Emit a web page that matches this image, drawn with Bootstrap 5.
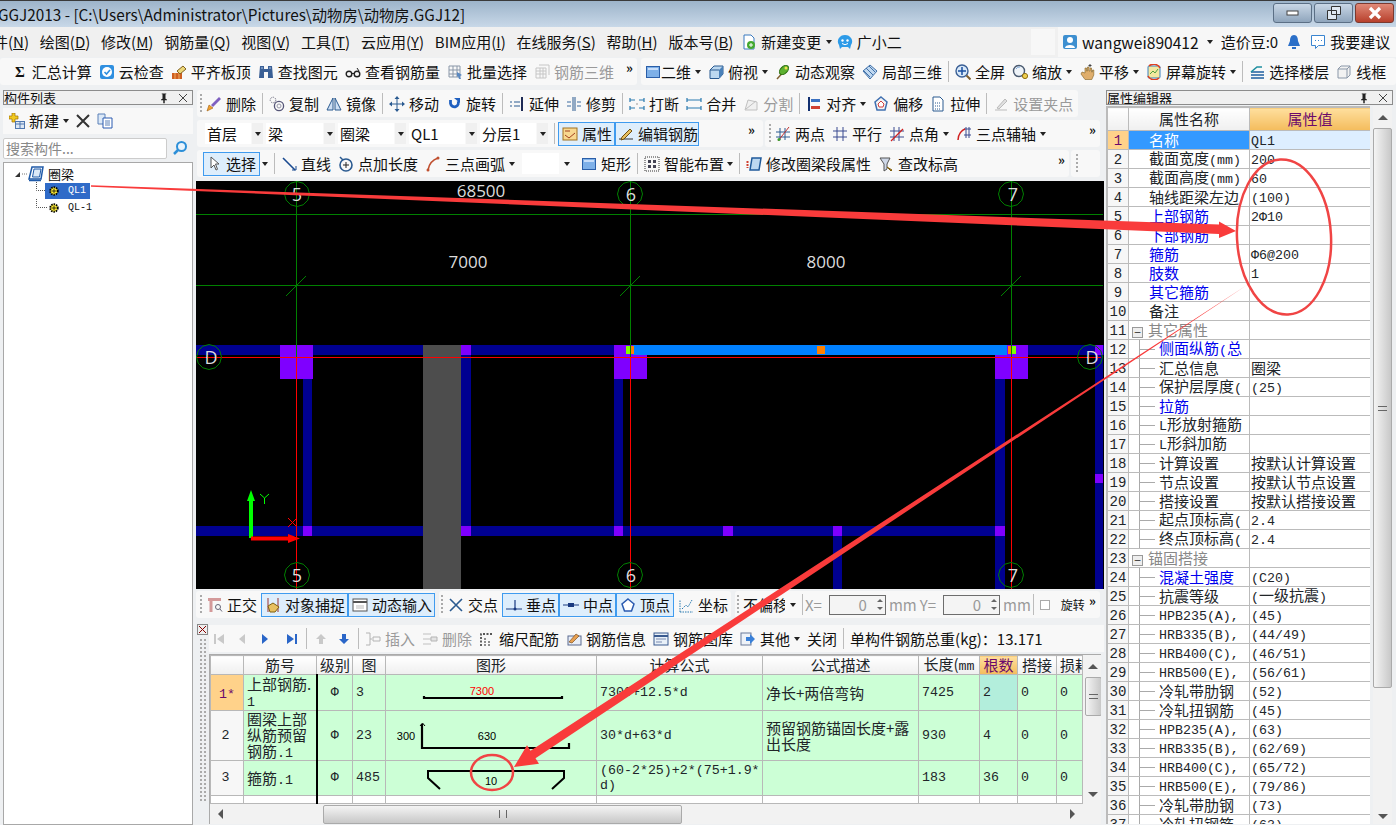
<!DOCTYPE html>
<html lang="zh">
<head>
<meta charset="UTF-8" />
<title>GGJ2013</title>
<link href="https://cdn.jsdelivr.net/npm/bootstrap@5.3.3/dist/css/bootstrap.min.css" rel="stylesheet" />
<style>
  body { width:1396px; height:825px; overflow:hidden; position:relative; background:#eef0f2; color:#111;
    font-family:"Noto Sans CJK SC","Liberation Sans",sans-serif; font-size:15px; line-height:18px; }
  .ic { width:16px; height:16px; flex:none; }
  .lat { font-family:"Liberation Mono","Noto Sans CJK SC",monospace; font-size:13.3px; line-height:1; }

  .wtitle { height:27px; background:linear-gradient(#9db4ca,#c8d8e8); border-top:1px solid #3a3a3a; padding-left:0; }
  .wtitle .ttl { margin-left:-2px; font-size:15.3px; white-space:nowrap; }
  .wbtn { width:39px; height:20px; margin:2px 2px 0 0; border:1px solid #5b6f85; border-radius:3px; background:linear-gradient(#c9d7e6,#8fa5bc); }
  .wbtn.cls { background:linear-gradient(#e08a78,#b8402c); border-color:#7a3a30; margin-right:2px; }
  .mbar { height:30px; background:#f0f0f0; gap:10.8px; white-space:nowrap; overflow:hidden; }
  .mbar .m0 { margin-left:-7px; }
  .mbar .mdoc { margin-left:-3px; }
  .mbar .mpull { margin-left:-6px; }
  .mright { height:30px; background:#f7f7f7; padding-left:4px; gap:4px; width:338px; flex:none; }
  .uname { font-size:15.6px; }
  .mstub { width:24px; height:26px; background:#f7f7f7; margin-left:auto; margin-right:-7.8px; flex:none; }

  .tbrow { height:33px; padding-top:1px; gap:4px; }
  .chunk { height:27px; background:#f8f8f8; border-radius:3px; gap:7px; white-space:nowrap; flex:none; }
  .ti { display:inline-flex; align-items:center; gap:4px; height:24px; flex:none; }
  .ti.off { color:#9a9a9a; }
  .ti.on { background:#deeefc; outline:1px solid #3f9bef; outline-offset:-1px; padding:0 1px 0 4px; }
  .tsep { width:1px; height:21px; background:#bcbcbc; margin:0 -1px; flex:none; }
  .sepb { margin:0 0 0 3px; }
  .grip { width:2px; height:20px; flex:none; margin-right:-3px; background:repeating-linear-gradient(#aaa 0 2px,transparent 2px 4px); }
  .cr { display:inline-block; width:0; height:0; flex:none; border-top:4px solid #222; border-left:3.5px solid transparent; border-right:3.5px solid transparent; }
  .more { font-size:13px; font-weight:700; line-height:10px; margin-bottom:8px; flex:none; }
  .sig { font-weight:700; font-family:"Liberation Serif",serif; font-size:15px; margin-right:3px; }

  .leftp { width:196px; flex:none; }
  .centerp { width:908px; flex:none; }
  .rightp { width:292px; flex:none; }
  .ptitle { height:15px; border:1px solid #8c8c8c; background:#f0f0f0; font-size:13px; line-height:13px; padding:0 4px 0 0; overflow:hidden; }
  .ltitle { margin:0 3px; }
  .rtitle { margin:0 3px 0 2px; }
  .ltool { height:26px; margin:3px 3px 0 3px; padding-left:6px; background:#f8f8f8; gap:6px; }
  .lsearch { height:22px; margin:3px 0 0 3px; gap:5px; }
  .lsearch .sbox { width:164px; height:21px; background:#fff; border:1px solid #ccc; color:#888; font-size:14px; line-height:19px; padding-left:2px; border-radius:2px; }
  .ltree { margin:3px 3px 0; height:663px; background:#fff; border:1px solid #a8a8a8; padding-top:2px; font-size:13px; }
  .trow { height:17px; display:flex; align-items:center; white-space:nowrap; }
  .trow.kid1 { margin-left:32px; }
  .qlname { font-family:"Liberation Mono",monospace; font-size:10px; padding-left:8px; white-space:nowrap; }
  .qlsel { background:#2f6bc8; color:#fff; display:flex; align-items:center; width:45px; height:16px; padding-left:3px; }

  .crow { height:30px; padding-top:0; gap:2px; }
  .crow.last { height:31px; }
  .cad { height:408px; background:#000; }
  .cad svg { display:block; }
  .cb { width:68px; height:21px; gap:1px; flex:none; }
  .cb .cbt { flex:1; background:#fff; height:21px; padding-left:2px; line-height:21px; overflow:hidden; white-space:nowrap; }
  .cb .cbt.flat { background:#f8f8f8; padding:0; }
  .cb .cbc { width:11px; height:21px; background:#f0f0f0; display:flex; align-items:center; justify-content:center; }
  .snapr { height:32px; padding-top:2px; gap:4px; }
  .spinp { width:57px; height:20px; padding:0 18px 0 0; border:1px solid #6d6d6d; border-radius:0; background:#f4f4f4; color:#999; text-align:right; font-size:15px; line-height:18px; flex:none; }
  .spinp:disabled { background:#f4f4f4; opacity:1; }
  .spinb { width:12px; height:20px; margin-left:-15px; flex:none; display:flex; flex-direction:column; justify-content:center; gap:5px; align-items:center; }
  .spinb i { display:block; width:0; height:0; border-left:3px solid transparent; border-right:3px solid transparent; }
  .spinb i.u { border-bottom:3px solid #666; }
  .spinb i.d { border-top:3px solid #666; }
  .graytx { color:#9a9a9a; flex:none; }
  .ck { width:10px; height:10px; border:1px solid #aaa; background:#fff; flex:none; }
  .rot12 { font-size:12px; }

  .rebar { height:204px; }
  .strip { width:13px; flex:none; padding-top:3px; }
  .strip .xbox { width:11px; height:11px; border:1px solid #888; background:#eee; margin-left:1px; }
  .strip .dots { width:8px; height:165px; margin:3px 0 0 3px; background:radial-gradient(circle,#aaa 1px,transparent 1.2px) 0 0/4px 4px; }
  .rtool { height:27px; background:#f8f8f8; margin-top:4px; padding-left:2px; gap:7px; white-space:nowrap; }
  .gr { color:#c9c9c9; }
  .bl { color:#2a66c8; }
  .rwrap { height:170px; width:892px; margin-top:2px; overflow:hidden; border:1px solid #aaa; border-width:1px 0 0 1px; background:#f2f2f2; }
  .rwrap .tblbox { width:873px; flex:none; }
  .vscroll { width:18px; flex:none; background:#f2f2f2; display:flex; flex-direction:column; align-items:center; }
  .vscroll.tblv { height:147px; margin-left:1px; }
  .vscroll .upa { width:0; height:0; border:5px solid transparent; border-top:0; border-bottom:5px solid #555; margin-top:9px; }
  .vscroll .dna { width:0; height:0; border:5px solid transparent; border-bottom:0; border-top:5px solid #555; margin-top:auto; margin-bottom:5px; }
  .thumb { width:17px; background:linear-gradient(90deg,#f4f4f4,#c8c8c8); border:1px solid #aaa; border-radius:2px; display:flex; align-items:center; justify-content:center; }
  .thumb.sm { height:39px; }
  .thumb b { width:9px; height:5px; border-top:1px solid #666; border-bottom:1px solid #666; display:block; }
  .hscroll { height:20px; background:#f2f2f2; width:873px; }
  .hscroll .la, .hscroll .ra { width:0; height:0; border:5px solid transparent; flex:none; }
  .hscroll .la { border-left:0; border-right:5px solid #555; margin-left:8px; }
  .hscroll .ra { border-right:0; border-left:5px solid #555; margin-left:auto; margin-right:8px; }
  .hthumb { width:359px; height:19px; margin-left:100px; background:linear-gradient(#f4f4f4,#c8c8c8); border:1px solid #aaa; border-radius:2px; display:flex; align-items:center; justify-content:center; }
  .hthumb b { width:8px; height:8px; border-left:1px solid #666; border-right:1px solid #666; display:block; }

  .rb.table { table-layout:fixed; width:872px; margin:0; --bs-table-bg:transparent; }
  .rb>thead>tr>th, .rb>tbody>tr>td { padding:0 3px; border:1px solid #b8b8b8; vertical-align:middle; font-weight:400; line-height:16px; overflow:hidden; }
  .rb>thead>tr>th { height:19px; text-align:center; background:linear-gradient(#fff,#efefef); white-space:nowrap; line-height:14px; }
  .rb>tbody>tr>td { background:#ccffd6; }
  .rb>tbody>tr.r1 { height:36px; }
  .rb>tbody>tr.r2 { height:50px; }
  .rb>tbody>tr.r3 { height:35px; }
  .rb>tbody>tr.blank>td { background:#fff; height:8px; }
  .rb>thead>tr>th.ohd, .pg>thead>tr>th.ohd { background:linear-gradient(#ffdf9e,#f4bc5c); color:#6b0a6b; }
  .rb>tbody>tr>td.rn { background:#f7f7f7; text-align:center; padding-left:0; }
  .rb>tbody>tr>td.rnsel { background:#ffd28a; color:#6b0a6b; text-align:center; }
  .rb>tbody>tr>td.cnt { background:#b3eedc; }
  .rb>tbody>tr>td.bk, .rb>thead>tr>th.bk { border-right:2px solid #000; }
  .rb>tbody>tr>td.shp { padding:0; }
  .rb>tbody>tr>td.fm2 { line-height:15px; white-space:nowrap; }
  .rb svg { display:block; }

  .rgrid { margin:1px 3px 0 2px; height:718px; }
  .gridbox { width:264px; flex:none; height:718px; overflow:hidden; border:1px solid #bbb; border-width:1px 0 0 1px; background:#fff; }
  .pg.table { table-layout:fixed; width:263px; margin:0; --bs-table-bg:transparent; }
  .pg>thead>tr>th, .pg>tbody>tr>td { padding:0 1px; height:19px; border:1px solid #bbb; font-weight:400; line-height:14px; white-space:nowrap; overflow:hidden; vertical-align:middle; }
  .pg>tbody>tr { height:19px; }
  .pg>thead>tr>th { height:23px; text-align:center; background:linear-gradient(#fff,#efefef); }
  .pg>tbody>tr>td.n { background:#f7f7f7; text-align:center; padding:0; }
  .pg>tbody>tr>td.nsel { background:#ffd28a; color:#6b0a6b; text-align:center; padding:0; }
  .pg>tbody>tr>td.nm { padding-left:20px; }
  .pg>tbody>tr>td.nmsel { padding-left:20px; background:#3399ff; color:#fff; }
  .pg>tbody>tr>td.vsel { background:#ddeeff; }
  .pg>tbody>tr>td.blu { color:#0000ee; }
  .pg>tbody>tr>td.grp { color:#888; padding-left:20px; }
  .pg>tbody>tr>td.kid { padding-left:30px; background:linear-gradient(#aaa,#aaa) 10px 0/1px 100% no-repeat, linear-gradient(#aaa,#aaa) 10px 9px/16px 1px no-repeat; }
  .numc { font-size:14px; }
  .minus { display:inline-block; width:11px; height:11px; margin:0 5px 0 -17px; border:1px solid #999; background:#eee; vertical-align:-1px; line-height:7px; text-align:center; color:#333; font-size:12px; }
  .rvs { height:718px; margin-left:3px; width:19px; }
  .rvs .thumb { width:19px; height:560px; margin-top:8px; }

  .anno { position:absolute; left:0; top:0; pointer-events:none; }
</style>
</head>
<body>

<svg class="d-none">
  <symbol id="i-doc" viewBox="0 0 16 16"><path d="M3 1h7l3 3v11H3z" fill="#fff" stroke="#3a7ac0"/><circle cx="10" cy="11" r="4" fill="#43a82f"/><path d="M8 11h4M10 9v4" stroke="#fff"/></symbol>
  <symbol id="i-bub" viewBox="0 0 16 16"><path d="M8 1a7 6.500 0 0 1 6 10l-1 4-2-2H5l-2 2-1-4A7 6.500 0 0 1 8 1z" fill="#2d9be8"/><circle cx="5.500" cy="6.500" r="1.200" fill="#fff"/><circle cx="10.500" cy="6.500" r="1.200" fill="#fff"/><path d="M5 9.500q3 2.500 6 0" stroke="#fff" fill="none"/></symbol>
  <symbol id="i-usr" viewBox="0 0 16 16"><rect x="1" y="1" width="14" height="14" rx="2" fill="#3d8fd0"/><circle cx="8" cy="6" r="3" fill="#fff"/><path d="M3 14c0-4 10-4 10 0z" fill="#fff"/></symbol>
  <symbol id="i-bell" viewBox="0 0 16 16"><path d="M8 1c3 0 4 3 4 6l2 5H2l2-5c0-3 1-6 4-6z" fill="#2b6fc8"/><path d="M6 13h4v2H6z" fill="#2b6fc8"/></symbol>
  <symbol id="i-chat" viewBox="0 0 16 16"><path d="M1.500 1.500h13v10h-6l-3 3v-3h-4z" fill="#fff" stroke="#3a85d0"/><path d="M5 6.500h1M8 6.500h1M11 6.500h1" stroke="#3a85d0"/></symbol>
  <symbol id="i-cloud" viewBox="0 0 16 16"><rect x="1" y="1" width="14" height="14" rx="2" fill="#2f8fe0"/><circle cx="8" cy="8" r="5" fill="#fff"/><path d="M5.500 8l2 2 3.500-4" fill="none" stroke="#2f8fe0" stroke-width="1.600"/></symbol>
  <symbol id="i-flat" viewBox="0 0 16 16"><path d="M1 9h10v6H1z" fill="#cf5f20"/><path d="M4 9v6M8 9v6" stroke="#f0b060"/><path d="M6 7l6-5 3 3-6 5z" fill="#ecd778" stroke="#806020"/></symbol>
  <symbol id="i-bino" viewBox="0 0 16 16"><path d="M2 2h4v3h4V2h4l1 12h-5V8H6v6H1z" fill="#3a5f95"/><path d="M3 4h2M11 4h2" stroke="#a8c4e8"/></symbol>
  <symbol id="i-glass" viewBox="0 0 16 16"><circle cx="4" cy="10" r="2.800" fill="none" stroke="#222" stroke-width="1.400"/><circle cx="12" cy="10" r="2.800" fill="none" stroke="#222" stroke-width="1.400"/><path d="M7 9.500h2M14 7l-2-3" stroke="#222"/></symbol>
  <symbol id="i-batch" viewBox="0 0 16 16"><path d="M2 2h11v11H2zM2 6h11M2 10h11M6 2v11M10 2v11" fill="none" stroke="#8a97a8"/><path d="M10 8l5 3-2 1 1 3-2 0-1-3-1 1z" fill="#5a88c0"/></symbol>
  <symbol id="i-3dg" viewBox="0 0 16 16"><path d="M2 4h10v10H2zM5 1h10v10M2 7h10M2 10h10M6 4v10M9 4v10" fill="none" stroke="#c6c6c6"/></symbol>
  <symbol id="i-sq" viewBox="0 0 16 16"><rect x="1.500" y="2.500" width="13" height="11" fill="#7eb0e8" stroke="#2a5ea8"/><path d="M3 4h10v2H3z" fill="#c8defa"/></symbol>
  <symbol id="i-cube" viewBox="0 0 16 16"><path d="M2 6l4-4h9v8l-4 4.500H2z" fill="#bcd8f0" stroke="#2a5a90"/><path d="M11 14.500V6l4-4v8z" fill="#4a80b8"/><path d="M2 6h9" stroke="#2a5a90"/></symbol>
  <symbol id="i-orbit" viewBox="0 0 16 16"><path d="M2 15L13 3" stroke="#806030" stroke-width="1.500"/><ellipse cx="9" cy="6" rx="5.500" ry="3.500" transform="rotate(-45 9 6)" fill="#5cb030" stroke="#2d7010"/><circle cx="11" cy="4" r="1.500" fill="#f0e050"/></symbol>
  <symbol id="i-local" viewBox="0 0 16 16"><path d="M8 1l7 6-7 8-7-8z" fill="#c0d8f0" stroke="#4070a8"/><path d="M4 4l7 7M7 2l6 6M2 7l6 6" stroke="#4070a8"/></symbol>
  <symbol id="i-full" viewBox="0 0 16 16"><circle cx="7" cy="7" r="6" fill="#d8e8f8" stroke="#3a5f95" stroke-width="1.400"/><path d="M7 3v8M3 7h8" stroke="#1a4fa0" stroke-width="1.500"/><path d="M11.500 11.500l4 4" stroke="#806030" stroke-width="2"/></symbol>
  <symbol id="i-zoomi" viewBox="0 0 16 16"><circle cx="7" cy="7" r="5.500" fill="#eef3f8" stroke="#4a5a70" stroke-width="1.400"/><path d="M4 5a4 4 0 0 1 4-2" stroke="#7ea8d8" fill="none"/><circle cx="13" cy="12" r="2.600" fill="#efcf50" stroke="#907010"/></symbol>
  <symbol id="i-hand" viewBox="0 0 16 16"><path d="M3 8l3 1V4h1.500v3h1V3H10v4h1V4h1.500v4h1V6h1.300v5l-2 4.500H6L2 10z" fill="#dfae6c" stroke="#806020" stroke-width=".6"/><path d="M11 0v3M9.500 1.500h3" stroke="#444"/></symbol>
  <symbol id="i-screen" viewBox="0 0 16 16"><rect x="2" y="2" width="12" height="12" rx="1" fill="#f4e8a0" stroke="#3a80c0"/><path d="M4 10l3-3 2 2 3-4" stroke="#50a040" fill="none"/><path d="M14 4A7 7 0 0 0 3 2M2 12a7 7 0 0 0 11 2" stroke="#e04020" fill="none" stroke-width="1.500"/></symbol>
  <symbol id="i-floor" viewBox="0 0 16 16"><path d="M2 8h13M2 11h13M2 14h13" stroke="#1f5fa0" stroke-width="1.600" fill="none"/><path d="M2 8l6-5h5" stroke="#1f8fa0" stroke-width="1.600" fill="none"/></symbol>
  <symbol id="i-wire" viewBox="0 0 16 16"><path d="M2 5l3-3h9v9l-3 3H2zM2 5h9v9M11 5l3-3" fill="#f2f2f2" stroke="#8a97a8"/></symbol>
  <symbol id="i-brush" viewBox="0 0 16 16"><path d="M1 15l2-6 4 3z" fill="#f0a030" stroke="#a06010" stroke-width=".6"/><path d="M5 9l8-8 2 2-8 8z" fill="#7f60c0"/></symbol>
  <symbol id="i-copyc" viewBox="0 0 16 16"><circle cx="4" cy="4" r="2.800" fill="none" stroke="#778" stroke-dasharray="1.500 1"/><circle cx="10" cy="10" r="4.600" fill="none" stroke="#557" stroke-width="1.300"/><circle cx="10" cy="10" r="2" fill="none" stroke="#99a"/></symbol>
  <symbol id="i-mirror" viewBox="0 0 16 16"><path d="M7 2v12H1zM9 2v12h6z" fill="#cfe0f4" stroke="#2a5a90"/></symbol>
  <symbol id="i-move" viewBox="0 0 16 16"><path d="M8 1v14M1 8h14" stroke="#2a5a90"/><path d="M8 0l-2.500 3h5zM8 16l-2.500-3h5zM0 8l3-2.500v5zM16 8l-3-2.500v5z" fill="#2a5a90"/></symbol>
  <symbol id="i-rot" viewBox="0 0 16 16"><path d="M4.500 4v3.500a4 4 0 1 0 7.500-2.500" fill="none" stroke="#2060c0" stroke-width="2.800"/><path d="M8 2h6v5z" fill="#2060c0"/></symbol>
  <symbol id="i-ext" viewBox="0 0 16 16"><path d="M1 6h2M1 10h2M5 6h6M5 10h6" stroke="#2a5a90"/><path d="M13 1v14" stroke="#1d2a55" stroke-width="2"/></symbol>
  <symbol id="i-trim" viewBox="0 0 16 16"><path d="M7 1v14M9 1v14" stroke="#2a5a90"/><path d="M1 6h4M1 10h4M11 6h4M11 10h4" stroke="#3a6aa0"/></symbol>
  <symbol id="i-brk" viewBox="0 0 16 16"><path d="M1 4h5M10 4h5M1 12h5M10 12h5M1 2v4M15 2v4M1 10v4M15 10v4" stroke="#2a7ab0" stroke-width="1.200"/><path d="M7 8h2" stroke="#999"/></symbol>
  <symbol id="i-mrg" viewBox="0 0 16 16"><path d="M1 4h14M1 12h14M1 2v4M15 2v4M1 10v4M15 10v4" stroke="#2a7ab0" stroke-width="1.200"/></symbol>
  <symbol id="i-splt" viewBox="0 0 16 16"><path d="M2 14h12V6L5 4zM3 13l10-8" fill="#f0f0f0" stroke="#c0c0c0"/></symbol>
  <symbol id="i-aln" viewBox="0 0 16 16"><path d="M3 1v14" stroke="#123070" stroke-width="2"/><rect x="5" y="3" width="9" height="3" fill="#3a70c0"/><rect x="5" y="10" width="9" height="3" fill="#d04030"/></symbol>
  <symbol id="i-off" viewBox="0 0 16 16"><path d="M8 1l6 5-2 8H4L2 6z" fill="#f4f4f4" stroke="#4070b0" stroke-width="1.500"/><path d="M8 5l3 3-1 3H6L5 8z" fill="#fff" stroke="#d04040"/></symbol>
  <symbol id="i-str" viewBox="0 0 16 16"><path d="M3 1h7l3 3v11H3z" fill="#fff" stroke="#2a5a90"/><path d="M5 7h6M5 10h6M5 13h6" stroke="#2a5a90" stroke-dasharray="1 1"/></symbol>
  <symbol id="i-ggr" viewBox="0 0 16 16"><path d="M2 14h12" stroke="#bbb"/><path d="M4 12l8-9 2 2-8 8z" fill="#e0e0e0" stroke="#bbb"/></symbol>
  <symbol id="i-prop" viewBox="0 0 16 16"><rect x="1" y="2" width="14" height="12" fill="#f8d890" stroke="#a07020"/><path d="M3 5h5M3 9l4 3 6-5" stroke="#a04020" fill="none"/></symbol>
  <symbol id="i-pen" viewBox="0 0 16 16"><path d="M1 13h14" stroke="#333"/><path d="M4 11l8-8 2 2-8 8-3 1z" fill="#e8c060" stroke="#705010"/></symbol>
  <symbol id="i-2pt" viewBox="0 0 16 16"><path d="M5 2v12M10 2v12M1 6h14M1 11h14" stroke="#2a5a90"/><path d="M3 15L14 1" stroke="#c03030"/><circle cx="4" cy="13.500" r="1.500" fill="#3aa030"/></symbol>
  <symbol id="i-par" viewBox="0 0 16 16"><path d="M5 1v14M11 1v14M1 5h14M1 11h14" stroke="#3a4a90"/></symbol>
  <symbol id="i-ang" viewBox="0 0 16 16"><path d="M5 1v14M10 1v14M1 5h14M1 11h14" stroke="#3a4a90"/><path d="M2 15L14 3" stroke="#d02020" stroke-width="1.300"/></symbol>
  <symbol id="i-3pa" viewBox="0 0 16 16"><path d="M8 3h7M8 9h7M10 1v11M13 1v11" stroke="#3a4a90"/><path d="M2 14C2 8 6 4 9 3" stroke="#d02020" fill="none" stroke-width="1.500"/></symbol>
  <symbol id="i-cur" viewBox="0 0 16 16"><path d="M4 1v11l3-3 2 5 1.500-.7L8.500 8H12z" fill="#fff" stroke="#555"/></symbol>
  <symbol id="i-line" viewBox="0 0 16 16"><path d="M2 2l12 12" stroke="#1a4a90" stroke-width="1.600"/><path d="M11 14h4v-4" stroke="#1a4a90" fill="none"/></symbol>
  <symbol id="i-plen" viewBox="0 0 16 16"><circle cx="8" cy="9" r="6" fill="none" stroke="#2a5a90" stroke-width="1.600"/><path d="M8 6v6M5 9h6" stroke="#222"/><path d="M2 1l3 3" stroke="#2a5a90" stroke-width="1.500"/></symbol>
  <symbol id="i-arc" viewBox="0 0 16 16"><path d="M3 14C4 8 7 4 13 2" fill="none" stroke="#c05030" stroke-width="1.600"/><circle cx="3" cy="14" r="1.500" fill="#c05030"/><circle cx="13" cy="2" r="1.500" fill="#c05030"/></symbol>
  <symbol id="i-smart" viewBox="0 0 16 16"><rect x="1" y="1" width="14" height="14" fill="none" stroke="#333" stroke-dasharray="1 1"/><path d="M4 4h3v3H4zM9 9h3v3H9zM9 4h3v3H9zM4 9h3v3H4z" fill="#445"/></symbol>
  <symbol id="i-mod" viewBox="0 0 16 16"><path d="M6 2h9l-2 12H4z" fill="#bcd8f0" stroke="#1f5a9a" stroke-width="1.500"/><path d="M1.500 5v7" stroke="#d04030" stroke-width="2" stroke-dasharray="2 1"/></symbol>
  <symbol id="i-elev" viewBox="0 0 16 16"><path d="M2 2h10L9 8v5l-3 2V8z" fill="#cfd8e8" stroke="#555"/><path d="M9 11l5 3-1 1z" fill="#c09030" stroke="#806010"/></symbol>
  <symbol id="i-ort" viewBox="0 0 16 16"><path d="M1 2.500h13M4 2v13" stroke="#d49a9a" stroke-width="3"/><circle cx="11" cy="10" r="2.500" fill="none" stroke="#667"/><path d="M13 12l2 2.500" stroke="#667"/></symbol>
  <symbol id="i-snp" viewBox="0 0 16 16"><path d="M3 1v14M13 1v14" stroke="#933"/><path d="M3 9l5-3 6 4-4 5H5z" fill="#e8c060" stroke="#806010"/></symbol>
  <symbol id="i-dyn" viewBox="0 0 16 16"><rect x="1" y="2" width="14" height="12" fill="#fff" stroke="#555"/><path d="M1 5h14" stroke="#555" stroke-width="2"/><path d="M4 8h8v4H4z" fill="#ddd"/></symbol>
  <symbol id="i-xp" viewBox="0 0 16 16"><path d="M2 2l12 12M14 2L2 14" stroke="#2a5a90" stroke-width="1.600"/></symbol>
  <symbol id="i-perp" viewBox="0 0 16 16"><path d="M0 12h16M9 3v9" stroke="#1a3a80" stroke-width="1.200"/><circle cx="9" cy="12" r="1.500" fill="#1a3a80"/></symbol>
  <symbol id="i-mid" viewBox="0 0 16 16"><path d="M0 8h16" stroke="#1a3a80"/><rect x="5" y="6" width="6" height="4" fill="#1a3a80"/></symbol>
  <symbol id="i-ver" viewBox="0 0 16 16"><path d="M8 2l6 5-2.500 7h-7L2 7z" fill="#fff" stroke="#2a5ab0" stroke-width="1.500"/></symbol>
  <symbol id="i-crd" viewBox="0 0 16 16"><path d="M2 15V3M2 15h13M4 12l4-4 2 2 4-7" stroke="#2a7ab0" stroke-dasharray="1.500 1" fill="none"/></symbol>
  <symbol id="i-first" viewBox="0 0 16 16"><path d="M3 3h2v10H3zM13 3v10L6 8z" fill="currentColor"/></symbol>
  <symbol id="i-prev" viewBox="0 0 16 16"><path d="M11 3v10L5 8z" fill="currentColor"/></symbol>
  <symbol id="i-next" viewBox="0 0 16 16"><path d="M5 3v10l6-5z" fill="currentColor"/></symbol>
  <symbol id="i-last" viewBox="0 0 16 16"><path d="M11 3h2v10h-2zM3 3v10l7-5z" fill="currentColor"/></symbol>
  <symbol id="i-up" viewBox="0 0 16 16"><path d="M8 3l5 5h-3v5H6V8H3z" fill="currentColor"/></symbol>
  <symbol id="i-dn" viewBox="0 0 16 16"><path d="M8 13l5-5h-3V3H6v5H3z" fill="currentColor"/></symbol>
  <symbol id="i-ins" viewBox="0 0 16 16"><path d="M1 2h4v12H1M5 8h2M8 6h7v4H8z" fill="none" stroke="#b4b4b4"/></symbol>
  <symbol id="i-rdel" viewBox="0 0 16 16"><path d="M1 3h8M1 8h8M1 13h8" stroke="#c0c0c0"/><path d="M9 6h6v4H9z" fill="#e4e4e4" stroke="#b4b4b4"/></symbol>
  <symbol id="i-scale" viewBox="0 0 16 16"><path d="M2 15V3h12" stroke="#222" stroke-dasharray="2 1.500" fill="none" stroke-width="1.400"/><path d="M6 7v8M10 10v5" stroke="#222" stroke-dasharray="2 1"/></symbol>
  <symbol id="i-info" viewBox="0 0 16 16"><rect x="2" y="5" width="13" height="9" fill="#e8eef8" stroke="#5a6a90"/><path d="M3 11l7-8 3 2-7 7z" fill="#e8a050" stroke="#805020" stroke-width=".7"/></symbol>
  <symbol id="i-lib" viewBox="0 0 16 16"><rect x="1" y="2" width="14" height="12" fill="#e8f0f8" stroke="#3a5a90"/><path d="M1 5h14" stroke="#3a5a90" stroke-width="2"/><path d="M3 8h10M3 11h6" stroke="#7a8ab0"/></symbol>
  <symbol id="i-oth" viewBox="0 0 16 16"><rect x="1" y="2" width="10" height="12" fill="#eef2f8" stroke="#6a7a9a"/><path d="M6 6h4V3l5 5-5 5v-3H6z" fill="#3a80d8"/></symbol>
  <symbol id="i-new" viewBox="0 0 16 16"><path d="M3 0h3v3h3v3H6v3H3V6H0V3h3z" fill="#f0c820" stroke="#a07000" stroke-width=".7"/><rect x="6.500" y="8.500" width="9" height="7" fill="#dde8f5" stroke="#5078b0"/><path d="M6.500 11h9M11 8.500v7" stroke="#5078b0"/></symbol>
  <symbol id="i-cp2" viewBox="0 0 16 16"><path d="M1 1h7v10H1z" fill="#dce9f7" stroke="#5a80b8"/><path d="M6 5h9v10H6z" fill="#fff" stroke="#2a5ab0"/><path d="M8 8h5M8 10h5M8 12h5" stroke="#5a80b8"/></symbol>
  <symbol id="i-srch" viewBox="0 0 16 16"><circle cx="9.500" cy="6.500" r="4.500" fill="#eaf4fc" stroke="#2d8fd8" stroke-width="2"/><path d="M6 10l-4 4" stroke="#2d8fd8" stroke-width="2.500"/></symbol>
  <symbol id="i-fr" viewBox="0 0 16 16"><path d="M4 1h11l-2 12H1z" fill="#fff" stroke="#1f5aa8" stroke-width="1.500"/><path d="M6 3h7l-1.500 8H4.500z" fill="#dce9f7" stroke="#1f5aa8"/><path d="M1 14.500h12" stroke="#1f5aa8" stroke-width="1.500"/></symbol>
  <symbol id="i-gear" viewBox="0 0 16 16"><circle cx="8" cy="8" r="5" fill="#ffee33" stroke="#000" stroke-width="2.500" stroke-dasharray="2 1.200"/><path d="M5 8h6M8 5v6" stroke="#000"/></symbol>
  <symbol id="i-pin" viewBox="0 0 16 16"><path d="M5 2h6v1h-1v6l2 1v1H9v4H7v-4H4v-1l2-1V3H5z" fill="#222"/></symbol>
  <symbol id="i-bubble" viewBox="-13 -13 26 26" overflow="visible"><polygon points="12.500,0 10.800,6.200 6.200,10.800 0,12.500 -6.200,10.800 -10.800,6.200 -12.500,0 -10.800,-6.200 -6.200,-10.800 0,-12.500 6.200,-10.800 10.800,-6.200" fill="none" stroke="#008000"/></symbol>
</svg>

<div class="wtitle d-flex align-items-start">
  <div class="ttl flex-grow-1 pt-1">GGJ2013 - [C:\Users\Administrator\Pictures\动物房\动物房.GGJ12]</div>
  <div class="wbtn d-flex align-items-center justify-content-center"><svg width="16" height="8"><rect x="2" y="2" width="11" height="4" fill="#fff" stroke="#444"/></svg></div>
  <div class="wbtn d-flex align-items-center justify-content-center"><svg width="16" height="16"><path d="M5.500 1.500h9v8h-9zM1.500 5.500h9v9h-9z" fill="#dfe8f2" stroke="#333"/></svg></div>
  <div class="wbtn cls d-flex align-items-center justify-content-center"><svg width="14" height="14"><path d="M2 2l10 10M12 2L2 12" stroke="#fff" stroke-width="3.200"/></svg></div>
</div>

<div class="mbar d-flex align-items-center">
  <span class="m0">件(<u>N</u>)</span><span>绘图(<u>D</u>)</span><span>修改(<u>M</u>)</span><span>钢筋量(<u>Q</u>)</span><span>视图(<u>V</u>)</span><span>工具(<u>T</u>)</span><span>云应用(<u>Y</u>)</span><span>BIM应用(<u>I</u>)</span><span>在线服务(<u>S</u>)</span><span>帮助(<u>H</u>)</span><span>版本号(<u>B</u>)</span>
  <span class="ti mdoc"><svg class="ic"><use href="#i-doc"/></svg>新建变更</span><span class="cr mpull"></span>
  <span class="ti mpull"><svg class="ic"><use href="#i-bub"/></svg>广小二</span>
  <span class="mstub"></span>
  <div class="mright d-flex align-items-center">
    <svg class="ic"><use href="#i-usr"/></svg><span class="uname">wangwei890412</span><span class="cr ms-1"></span><span class="ms-1">造价豆:0</span><svg class="ic ms-1"><use href="#i-bell"/></svg><svg class="ic ms-1"><use href="#i-chat"/></svg><span>我要建议</span>
  </div>
</div>

<div class="tbrow d-flex">
  <div class="chunk d-flex align-items-center" style="width:637px;padding-left:15px">
    <span class="ti"><span class="sig">Σ</span>汇总计算</span>
    <span class="ti"><svg class="ic"><use href="#i-cloud"/></svg>云检查</span>
    <span class="ti"><svg class="ic"><use href="#i-flat"/></svg>平齐板顶</span>
    <span class="ti"><svg class="ic"><use href="#i-bino"/></svg>查找图元</span>
    <span class="ti"><svg class="ic"><use href="#i-glass"/></svg>查看钢筋量</span>
    <span class="ti"><svg class="ic"><use href="#i-batch"/></svg>批量选择</span>
    <span class="ti off"><svg class="ic"><use href="#i-3dg"/></svg>钢筋三维</span>
    <span class="more ms-auto me-1">»</span>
  </div>
  <div class="chunk d-flex align-items-center" style="padding-left:4px;width:755px">
    <span class="ti gap-0"><svg class="ic"><use href="#i-sq"/></svg>二维<span class="cr ms-1"></span></span>
    <span class="ti"><svg class="ic"><use href="#i-cube"/></svg>俯视<span class="cr"></span></span>
    <span class="ti"><svg class="ic"><use href="#i-orbit"/></svg>动态观察</span>
    <span class="ti"><svg class="ic"><use href="#i-local"/></svg>局部三维</span>
    <span class="tsep"></span>
    <span class="ti"><svg class="ic"><use href="#i-full"/></svg>全屏</span>
    <span class="ti"><svg class="ic"><use href="#i-zoomi"/></svg>缩放<span class="cr"></span></span>
    <span class="ti"><svg class="ic"><use href="#i-hand"/></svg>平移<span class="cr"></span></span>
    <span class="ti"><svg class="ic"><use href="#i-screen"/></svg>屏幕旋转<span class="cr"></span></span>
    <span class="tsep"></span>
    <span class="ti"><svg class="ic"><use href="#i-floor"/></svg>选择楼层</span>
    <span class="ti"><svg class="ic"><use href="#i-wire"/></svg>线框</span>
  </div>
</div>

<div class="d-flex">
  <div class="leftp">
    <div class="ptitle ltitle d-flex align-items-center">
      <span class="flex-grow-1">构件列表</span>
      <svg width="12" height="12" class="me-2"><use href="#i-pin"/></svg>
      <svg width="10" height="10"><path d="M1 1l8 8M9 1L1 9" stroke="#444"/></svg>
    </div>
    <div class="ltool d-flex align-items-center">
      <span class="ti"><svg class="ic"><use href="#i-new"/></svg>新建<span class="cr"></span></span>
      <svg class="ic"><path d="M2 2l12 12M14 2L2 14" stroke="#333" stroke-width="2"/></svg>
      <svg class="ic"><use href="#i-cp2"/></svg>
    </div>
    <div class="lsearch d-flex align-items-center">
      <div class="sbox">搜索构件...</div>
      <svg class="ic"><use href="#i-srch"/></svg>
    </div>
    <div class="ltree">
      <div class="trow"><svg width="24" height="17"><path d="M11 12h5V7z" fill="#333"/><path d="M18 9h6" stroke="#777" stroke-dasharray="1 1"/></svg><svg class="ic"><use href="#i-fr"/></svg><span class="ms-1">圈梁</span></div>
      <div class="trow kid1"><svg width="9" height="17"><path d="M.5 0V8.500H9" stroke="#555" stroke-dasharray="1 1" fill="none"/></svg><span class="qlsel"><svg width="12" height="12"><use href="#i-gear"/></svg><span class="qlname">QL1</span></span></div>
      <div class="trow kid1"><svg width="12" height="17"><path d="M.5 0V8.500H12" stroke="#555" stroke-dasharray="1 1" fill="none"/></svg><svg width="12" height="12"><use href="#i-gear"/></svg><span class="qlname">QL-1</span></div>
    </div>
  </div>

  <div class="centerp d-flex flex-column">
    <div class="crow d-flex">
      <div class="chunk d-flex align-items-center" style="width:881px;padding-left:3px;margin-left:1px">
        <span class="grip"></span>
        <span class="ti"><svg class="ic"><use href="#i-brush"/></svg>删除</span><span class="tsep"></span>
        <span class="ti"><svg class="ic"><use href="#i-copyc"/></svg>复制</span>
        <span class="ti"><svg class="ic"><use href="#i-mirror"/></svg>镜像</span><span class="tsep"></span>
        <span class="ti"><svg class="ic"><use href="#i-move"/></svg>移动</span>
        <span class="ti"><svg class="ic"><use href="#i-rot"/></svg>旋转</span><span class="tsep"></span>
        <span class="ti"><svg class="ic"><use href="#i-ext"/></svg>延伸</span>
        <span class="ti"><svg class="ic"><use href="#i-trim"/></svg>修剪</span><span class="tsep"></span>
        <span class="ti"><svg class="ic"><use href="#i-brk"/></svg>打断</span>
        <span class="ti"><svg class="ic"><use href="#i-mrg"/></svg>合并</span>
        <span class="ti off"><svg class="ic"><use href="#i-splt"/></svg>分割</span><span class="tsep"></span>
        <span class="ti"><svg class="ic"><use href="#i-aln"/></svg>对齐<span class="cr"></span></span>
        <span class="ti"><svg class="ic"><use href="#i-off"/></svg>偏移</span>
        <span class="ti"><svg class="ic"><use href="#i-str"/></svg>拉伸</span><span class="tsep"></span>
        <span class="ti off"><svg class="ic"><use href="#i-ggr"/></svg>设置夹点</span>
      </div>
    </div>
    <div class="crow d-flex">
      <div class="chunk d-flex align-items-center" style="width:566px;padding-left:8px;margin-left:1px;gap:3px">
        <span class="cb d-flex" style="width:58px"><span class="cbt">首层</span><span class="cbc"><span class="cr"></span></span></span>
        <span class="cb d-flex" style="width:69px"><span class="cbt">梁</span><span class="cbc"><span class="cr"></span></span></span>
        <span class="cb d-flex"><span class="cbt">圈梁</span><span class="cbc"><span class="cr"></span></span></span>
        <span class="cb d-flex"><span class="cbt">QL1</span><span class="cbc"><span class="cr"></span></span></span>
        <span class="cb d-flex"><span class="cbt">分层1</span><span class="cbc"><span class="cr"></span></span></span>
        <span class="tsep sepb"></span>
        <span class="ti on" style="width:57px"><svg class="ic"><use href="#i-prop"/></svg>属性</span>
        <span class="ti on" style="margin-left:-3px;padding-left:3px"><svg class="ic"><use href="#i-pen"/></svg>编辑钢筋</span>
        <span class="more ms-auto me-2">»</span>
      </div>
      <div class="chunk d-flex align-items-center" style="width:335px;padding-left:4px">
        <span class="grip"></span>
        <span class="ti"><svg class="ic"><use href="#i-2pt"/></svg>两点</span>
        <span class="ti"><svg class="ic"><use href="#i-par"/></svg>平行</span>
        <span class="ti"><svg class="ic"><use href="#i-ang"/></svg>点角<span class="cr"></span></span>
        <span class="ti"><svg class="ic"><use href="#i-3pa"/></svg>三点辅轴<span class="cr"></span></span>
        <span class="more ms-auto me-1">»</span>
      </div>
    </div>
    <div class="crow last d-flex">
      <div class="chunk d-flex align-items-center" style="width:872px;padding-left:6px;margin-left:1px">
        <span class="ti on" style="width:57px;gap:3px"><svg class="ic"><use href="#i-cur"/></svg>选择</span><span class="cr" style="margin-left:-5px"></span><span class="tsep"></span>
        <span class="ti"><svg class="ic"><use href="#i-line"/></svg>直线</span>
        <span class="ti"><svg class="ic"><use href="#i-plen"/></svg>点加长度</span>
        <span class="ti"><svg class="ic"><use href="#i-arc"/></svg>三点画弧<span class="cr"></span></span>
        <span class="cb d-flex" style="width:52px"><span class="cbt"></span><span class="cr align-self-center mx-1"></span></span>
        <span class="ti"><svg class="ic"><use href="#i-sq"/></svg>矩形</span><span class="tsep"></span>
        <span class="ti"><svg class="ic"><use href="#i-smart"/></svg>智能布置<span class="cr" style="margin-left:-1px"></span></span><span class="tsep"></span>
        <span class="ti"><svg class="ic"><use href="#i-mod"/></svg>修改圈梁段属性</span>
        <span class="ti"><svg class="ic"><use href="#i-elev"/></svg>查改标高</span>
        <span class="more ms-auto me-1">»</span>
      </div>
      <div class="chunk d-flex align-items-center" style="width:29px;padding-left:5px"><span class="grip"></span></div>
    </div>

    <div class="cad">
      <svg width="908" height="408" viewBox="196 181 908 408">
        <g shape-rendering="crispEdges">
          <rect x="196" y="345" width="908" height="10" fill="#000090"/>
          <rect x="196" y="526" width="809" height="10" fill="#000090"/>
          <rect x="303" y="379" width="9" height="147" fill="#000090"/>
          <rect x="461" y="355" width="10" height="171" fill="#000090"/>
          <rect x="614" y="379" width="9" height="147" fill="#000090"/>
          <rect x="995" y="379" width="10" height="210" fill="#000090"/>
          <rect x="833" y="536" width="9" height="53" fill="#000090"/>
          <rect x="1095" y="355" width="8" height="234" fill="#000090"/>
          <rect x="423" y="345" width="38" height="244" fill="#4d4d4d"/>
          <g fill="#7f00ff">
            <rect x="280" y="345" width="33" height="34"/><rect x="614" y="345" width="33" height="34"/><rect x="995" y="345" width="33" height="34"/>
            <rect x="461" y="345" width="10" height="10"/><rect x="1095" y="345" width="8" height="10"/><rect x="1095" y="474" width="8" height="9"/>
            <rect x="303" y="526" width="9" height="10"/><rect x="461" y="526" width="10" height="10"/><rect x="614" y="526" width="9" height="10"/>
            <rect x="723" y="526" width="10" height="10"/><rect x="833" y="526" width="9" height="10"/><rect x="995" y="526" width="10" height="10"/>
          </g>
          <rect x="633" y="345" width="374" height="10" fill="#0080ff"/>
          <rect x="626" y="346" width="5" height="8" fill="#80ff00"/><rect x="631" y="346" width="3" height="8" fill="#ff8000"/>
          <rect x="817" y="346" width="8" height="8" fill="#ff8000"/>
          <rect x="1008" y="346" width="3" height="8" fill="#ff8000"/><rect x="1011" y="346" width="5" height="8" fill="#80ff00"/>
          <path d="M196 214.500H1103M196 285.500H1103M296.500 181V357M630.500 181V357M1011.500 181V357" stroke="#008000" fill="none"/>
          <path d="M196 357.500H1101M296.500 358V589M630.500 358V589M1011.500 358V589" stroke="#ff0000" fill="none"/>
        </g>
        <path d="M286 296l20-20M620 296l20-20M1001 296l20-20" stroke="#008000"/>
        <g>
          <use href="#i-bubble" x="284" y="181" width="26" height="26"/><use href="#i-bubble" x="617" y="181" width="26" height="26"/><use href="#i-bubble" x="998" y="181" width="26" height="26"/>
          <use href="#i-bubble" x="284" y="562" width="26" height="26"/><use href="#i-bubble" x="617" y="562" width="26" height="26"/><use href="#i-bubble" x="998" y="562" width="26" height="26"/>
          <use href="#i-bubble" x="196" y="344" width="26" height="26"/><use href="#i-bubble" x="1077" y="344" width="26" height="26"/>
        </g>
        <g fill="#dcdcdc" font-family="'Open Sans','Liberation Sans',sans-serif" text-anchor="middle" font-size="18">
          <text x="297" y="201">5</text><text x="631" y="201">6</text><text x="1013" y="201">7</text>
          <text x="297" y="582">5</text><text x="631" y="582">6</text><text x="1013" y="582">7</text>
          <text x="211" y="364">D</text><text x="1092" y="364">D</text>
          <text x="481" y="197" font-size="17">68500</text><text x="468" y="268" font-size="17">7000</text><text x="826" y="268" font-size="17">8000</text>
        </g>
        <path d="M249 538V501h-2l4-11 4 11h-2v37z" fill="#00ff00"/>
        <path d="M251 536.500h37V534l12 4.500-12 4.500v-2.500h-37z" fill="#ff0000"/>
        <path d="M260 494l4.500 4 4.500-4M264.500 498v6" stroke="#00ff00" fill="none"/>
        <path d="M288 518l9 9M297 518l-9 9" stroke="#ff0000"/>
      </svg>
    </div>

    <div class="snapr d-flex">
      <div class="chunk d-flex align-items-center" style="width:239px;padding-left:4px;gap:4px">
        <span class="grip"></span>
        <span class="ti ms-1"><svg class="ic"><use href="#i-ort"/></svg>正交</span>
        <span class="ti on" style="width:87px"><svg class="ic"><use href="#i-snp"/></svg>对象捕捉</span>
        <span class="ti on" style="margin-left:-4px;width:87px"><svg class="ic"><use href="#i-dyn"/></svg>动态输入</span>
      </div>
      <div class="chunk d-flex align-items-center" style="width:292px;padding-left:2px;gap:4px">
        <span class="grip"></span>
        <span class="ti ms-1"><svg class="ic"><use href="#i-xp"/></svg>交点</span>
        <span class="ti on" style="width:57px"><svg class="ic"><use href="#i-perp"/></svg>垂点</span>
        <span class="ti on" style="margin-left:-4px;width:57px"><svg class="ic"><use href="#i-mid"/></svg>中点</span>
        <span class="ti on" style="margin-left:-4px;width:58px"><svg class="ic"><use href="#i-ver"/></svg>顶点</span>
        <span class="ti"><svg class="ic"><use href="#i-crd"/></svg>坐标</span>
      </div>
      <div class="chunk d-flex align-items-center" style="padding-left:2px;gap:3px;width:365px">
        <span class="grip"></span>
        <span class="cb d-flex ms-1" style="width:57px"><span class="cbt flat">不偏移</span><span class="cr align-self-center mx-1"></span></span>
        <span class="tsep"></span>
        <span class="graytx me-1">X=</span><input class="form-control spinp" value="0" disabled /><span class="spinb"><i class="u"></i><i class="d"></i></span><span class="graytx">mm</span>
        <span class="graytx me-1">Y=</span><input class="form-control spinp" value="0" disabled /><span class="spinb"><i class="u"></i><i class="d"></i></span><span class="graytx">mm</span>
        <span class="tsep"></span>
        <span class="ck ms-1"></span><span class="ms-2 rot12">旋转</span>
        <span class="more ms-auto me-1">»</span>
      </div>
    </div>

    <div class="rebar d-flex">
      <div class="strip"><div class="xbox d-flex"><svg width="9" height="9"><path d="M1 1l7 7M8 1L1 8" stroke="#800"/></svg></div><div class="dots"></div></div>
      <div class="flex-grow-1">
        <div class="rtool d-flex align-items-center">
          <svg class="ic gr"><use href="#i-first"/></svg><svg class="ic gr"><use href="#i-prev"/></svg><svg class="ic bl"><use href="#i-next"/></svg><svg class="ic bl ms-1"><use href="#i-last"/></svg><span class="tsep"></span>
          <svg class="ic gr"><use href="#i-up"/></svg><svg class="ic bl"><use href="#i-dn"/></svg><span class="tsep"></span>
          <span class="ti off"><svg class="ic"><use href="#i-ins"/></svg>插入</span>
          <span class="ti off"><svg class="ic"><use href="#i-rdel"/></svg>删除</span>
          <span class="ti"><svg class="ic"><use href="#i-scale"/></svg>缩尺配筋</span>
          <span class="ti"><svg class="ic"><use href="#i-info"/></svg>钢筋信息</span>
          <span class="ti"><svg class="ic"><use href="#i-lib"/></svg>钢筋图库</span>
          <span class="ti"><svg class="ic"><use href="#i-oth"/></svg>其他<span class="cr"></span></span>
          <span class="ti">关闭</span><span class="tsep"></span>
          <span class="ti">单构件钢筋总重(kg)：13.171</span>
        </div>
        <div class="rwrap d-flex">
          <div class="tblbox">
            <table class="table table-bordered rb">
              <colgroup><col style="width:33px"><col style="width:73px"><col style="width:36px"><col style="width:33px"><col style="width:211px"><col style="width:166px"><col style="width:156px"><col style="width:61px"><col style="width:38px"><col style="width:39px"><col style="width:26px"></colgroup>
              <thead><tr><th></th><th>筋号</th><th>级别</th><th>图</th><th>图形</th><th>计算公式</th><th>公式描述</th><th>长度(<span class="lat">mm</span></th><th class="ohd">根数</th><th>搭接</th><th>损耗</th></tr></thead>
              <tbody>
                <tr class="r1"><td class="rnsel"><span class="lat">1*</span></td><td class="bk">上部钢筋.<br><span class="lat">1</span></td><td class="text-center lat">Φ</td><td class="lat">3</td>
                  <td class="shp"><svg width="211" height="34"><path d="M38 20v2h138v-2" fill="none" stroke="#000" stroke-width="2.200"/><text x="96" y="19" text-anchor="middle" fill="#f00" font-size="11" font-family="'Liberation Sans',sans-serif">7300</text></svg></td>
                  <td class="lat">7300+12.5*d</td><td>净长+两倍弯钩</td><td class="lat">7425</td><td class="cnt lat">2</td><td class="lat">0</td><td class="lat">0</td></tr>
                <tr class="r2"><td class="rn lat">2</td><td class="bk">圈梁上部<br>纵筋预留<br>钢筋<span class="lat">.1</span></td><td class="text-center lat">Φ</td><td class="lat">23</td>
                  <td class="shp"><svg width="211" height="48"><path d="M36 12v24h147v-5" fill="none" stroke="#000" stroke-width="2.200"/><path d="M34 14l2.500-3 2.500 3" fill="none" stroke="#000"/><g font-size="11" font-family="'Liberation Sans',sans-serif" text-anchor="middle"><text x="20" y="28">300</text><text x="101" y="28">630</text></g></svg></td>
                  <td class="lat">30*d+63*d</td><td>预留钢筋锚固长度+露<br>出长度</td><td class="lat">930</td><td class="lat">4</td><td class="lat">0</td><td class="lat">0</td></tr>
                <tr class="r3"><td class="rn lat">3</td><td class="bk">箍筋<span class="lat">.1</span></td><td class="text-center lat">Φ</td><td class="lat">485</td>
                  <td class="shp"><svg width="211" height="33"><path d="M54 27L42 16V9h136v7l-12 11" fill="none" stroke="#000" stroke-width="2"/><text x="105" y="23" text-anchor="middle" font-size="11" font-family="'Liberation Sans',sans-serif">10</text></svg></td>
                  <td class="lat fm2">(60-2*25)+2*(75+1.9*<br>d)</td><td></td><td class="lat">183</td><td class="lat">36</td><td class="lat">0</td><td class="lat">0</td></tr>
                <tr class="blank"><td></td><td class="bk"></td><td></td><td></td><td></td><td></td><td></td><td></td><td></td><td></td><td></td></tr>
              </tbody>
            </table>
            <div class="hscroll d-flex align-items-center"><span class="la"></span><span class="hthumb"><b></b></span><span class="ra"></span></div>
          </div>
          <div class="vscroll tblv"><span class="upa"></span><span class="thumb sm mt-2"><b></b></span><span class="dna"></span></div>
        </div>
      </div>
    </div>
  </div>

  <div class="rightp">
    <div class="ptitle rtitle d-flex align-items-center">
      <span class="flex-grow-1">属性编辑器</span>
      <svg width="12" height="12" class="me-2"><use href="#i-pin"/></svg>
      <svg width="10" height="10"><path d="M1 1l8 8M9 1L1 9" stroke="#444"/></svg>
    </div>
    <div class="rgrid d-flex">
      <div class="gridbox">
        <table class="table table-bordered pg">
          <colgroup><col style="width:21px"><col style="width:121px"><col style="width:121px"></colgroup>
          <thead><tr><th></th><th>属性名称</th><th class="ohd">属性值</th></tr></thead>
          <tbody id="propRows"></tbody>
        </table>
      </div>
      <div class="rvs vscroll"><span class="upa"></span><span class="thumb"><b></b></span><span class="dna"></span></div>
    </div>
  </div>
</div>

<svg class="anno" width="1396" height="825" viewBox="0 0 1396 825">
  <polygon points="91,185.300 1219,224.500 1219,221.500 1236,231 1219,238 1219,234 91,186.700" fill="#f93b3b"/>
  <polygon points="1247,285 530.500,750.700 527,745.300 514,767 539,763.700 535.500,758.300" fill="#f93b3b"/>
  <ellipse cx="1284" cy="237" rx="47" ry="77.500" transform="rotate(-3 1284 237)" fill="none" stroke="#f04444" stroke-width="2.500"/>
  <ellipse cx="492" cy="772.500" rx="21" ry="17.500" fill="none" stroke="#f04444" stroke-width="2.500"/>
</svg>

<script>
  // 属性编辑器 rows: name, value, kind (b blue, g group, k child, kb child blue)
  var props = [
    ["名称","QL1","s"],["截面宽度(mm)","200"],["截面高度(mm)","60"],["轴线距梁左边","(100)"],
    ["上部钢筋","2Φ10","b"],["下部钢筋","","b"],["箍筋","Φ6@200","b"],["肢数","1","b"],["其它箍筋","","b"],["备注",""],
    ["其它属性","","g"],["侧面纵筋(总","","kb"],["汇总信息","圈梁","k"],["保护层厚度(","(25)","k"],["拉筋","","kb"],
    ["L形放射箍筋","","k"],["L形斜加筋","","k"],["计算设置","按默认计算设置","k"],["节点设置","按默认节点设置","k"],
    ["搭接设置","按默认搭接设置","k"],["起点顶标高(","2.4","k"],["终点顶标高(","2.4","k"],
    ["锚固搭接","","g"],["混凝土强度","(C20)","kb"],["抗震等级","(一级抗震)","k"],["HPB235(A),","(45)","k"],
    ["HRB335(B),","(44/49)","k"],["HRB400(C),","(46/51)","k"],["HRB500(E),","(56/61)","k"],["冷轧带肋钢","(52)","k"],
    ["冷轧扭钢筋","(45)","k"],["HPB235(A),","(63)","k"],["HRB335(B),","(62/69)","k"],["HRB400(C),","(65/72)","k"],
    ["HRB500(E),","(79/86)","k"],["冷轧带肋钢","(73)","k"],["冷轧扭钢筋","(63)","k"]
  ];
  var lat = function (s) { return s.replace(/[\x21-\x7e\u03a6]+/g, '<span class="lat">$&</span>'); };
  document.getElementById("propRows").innerHTML = props.map(function (p, i) {
    var k = p[2] || "", nc = "nm", vc = "";
    if (k == "s") { nc = "nmsel"; vc = "vsel"; }
    if (k == "b") nc = "nm blu";
    if (k == "g") nc = "grp";
    if (k == "k") nc = "kid";
    if (k == "kb") nc = "kid blu";
    var label = (k == "g" ? '<span class="minus">−</span>' : "") + lat(p[0]);
    return '<tr><td class="' + (i == 0 ? "nsel" : "n") + '"><span class="lat numc">' + (i + 1) + '</span></td>' +
      '<td class="' + nc + '">' + label + '</td><td class="' + vc + '">' + lat(p[1]) + '</td></tr>';
  }).join("");
</script>
<script src="https://cdn.jsdelivr.net/npm/bootstrap@5.3.3/dist/js/bootstrap.bundle.min.js"></script>
</body>
</html>
